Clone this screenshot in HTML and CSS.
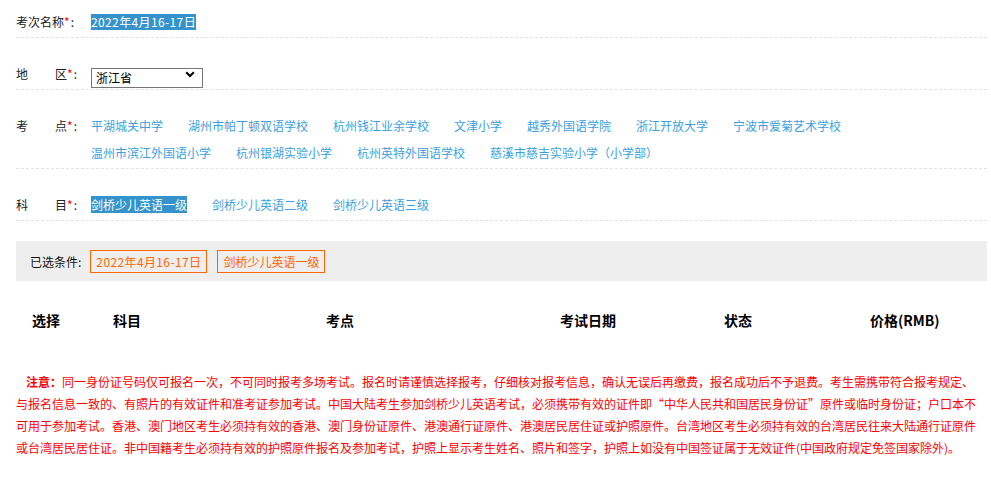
FILE: index.html
```html
<!DOCTYPE html>
<html lang="zh-CN">
<head>
<meta charset="utf-8">
<title>考试报名</title>
<link rel="stylesheet" href="styles.css">
</head>
<body>
<div class="page">
  <div class="row">
    <div class="label">考次名称<i>*</i>:</div>
    <div class="value"><span class="picked picked-date date">2022年4月16-17日</span></div>
  </div>
  <div class="row">
    <div class="label"><span class="spread">地</span>区<i>*</i>:</div>
    <div class="value">
      <div class="select-wrap">
        <select class="select"><option>浙江省</option></select>
        <svg class="chev" width="10" height="7" viewBox="0 0 10 7"><path d="M1.2 1.2L5 5L8.8 1.2" fill="none" stroke="#000" stroke-width="2"/></svg>
      </div>
    </div>
  </div>
  <div class="row">
    <div class="label"><span class="spread">考</span>点<i>*</i>:</div>
    <div class="value links">
      <a class="link">平湖城关中学</a>
      <a class="link">湖州市帕丁顿双语学校</a>
      <a class="link">杭州钱江业余学校</a>
      <a class="link">文津小学</a>
      <a class="link">越秀外国语学院</a>
      <a class="link">浙江开放大学</a>
      <a class="link">宁波市爱菊艺术学校</a>
      <a class="link">温州市滨江外国语小学</a>
      <a class="link">杭州银湖实验小学</a>
      <a class="link">杭州英特外国语学校</a>
      <a class="link">慈溪市慈吉实验小学（小学部）</a>
    </div>
  </div>
  <div class="row">
    <div class="label"><span class="spread">科</span>目<i>*</i>:</div>
    <div class="value links">
      <a class="link"><span class="picked">剑桥少儿英语一级</span></a>
      <a class="link">剑桥少儿英语二级</a>
      <a class="link">剑桥少儿英语三级</a>
    </div>
  </div>

  <div class="chosen">
    <span class="chosen-label">已选条件:</span>
    <span class="tag"><span class="date">2022年4月16-17日</span></span>
    <span class="tag">剑桥少儿英语一级</span>
  </div>

  <div class="thead">
    <div>选择</div>
    <div>科目</div>
    <div>考点</div>
    <div>考试日期</div>
    <div>状态</div>
    <div>价格(RMB)</div>
  </div>

  <p class="notice"><b>注意：</b>同一身份证号码仅可报名一次，不可同时报考多场考试。报名时请谨慎选择报考，仔细核对报考信息，确认无误后再缴费，报名成功后不予退费。考生需携带符合报考规定、与报名信息一致的、有照片的有效证件和准考证参加考试。中国大陆考生参加剑桥少儿英语考试，必须携带有效的证件即“中华人民共和国居民身份证”原件或临时身份证；户口本不可用于参加考试。香港、澳门地区考生必须持有效的香港、澳门身份证原件、港澳通行证原件、港澳居民居住证或护照原件。台湾地区考生必须持有效的台湾居民往来大陆通行证原件或台湾居民居住证。非中国籍考生必须持有效的护照原件报名及参加考试，护照上显示考生姓名、照片和签字，护照上如没有中国签证属于无效证件(中国政府规定免签国家除外)。</p>
</div>
</body>
</html>
```

FILE: styles.css
```css
html, body {
  margin: 0;
  padding: 0;
  background: #fff;
}

body {
  font-family: "Noto Sans CJK SC", sans-serif;
  font-size: 12px;
  color: #333;
}

.page {
  width: 971px;
  padding-left: 16px;
}

.row {
  display: flex;
  margin-top: 22px;
  padding-bottom: 2px;
  border-bottom: 1px dashed #e2e2e2;
  line-height: 27px;
}

.row:first-child {
  margin-top: 8px;
}

.label {
  flex: none;
  width: 75px;
  color: #222;
  white-space: nowrap;
}

.label i {
  font-style: normal;
  color: #f00;
  margin-right: 1px;
}

.spread {
  margin-right: 27px;
}

.value {
  flex: 1;
  display: flex;
  flex-wrap: wrap;
  align-items: center;
  min-height: 27px;
}

.picked {
  background: #3593cc;
  color: #fff;
}

.picked-date {
  line-height: 16px;
}

.date {
  letter-spacing: 0.38px;
}

.links .link {
  margin-right: 25px;
  color: #3a9fdd;
  text-decoration: none;
  white-space: nowrap;
  cursor: pointer;
}

.select-wrap {
  position: relative;
  width: 112px;
  height: 20px;
}

.select {
  appearance: none;
  -webkit-appearance: none;
  box-sizing: border-box;
  width: 112px;
  height: 20px;
  margin: 0;
  padding: 0 0 0 4px;
  border: 1px solid #767676;
  border-radius: 0;
  background: #fff;
  color: #000;
  font-family: "Noto Sans CJK SC", sans-serif;
  font-size: 12px;
  line-height: 18px;
}

.chev {
  position: absolute;
  right: 8px;
  top: 7px;
  pointer-events: none;
}

.chosen {
  margin-top: 20px;
  height: 40px;
  background: #eee;
  display: flex;
  align-items: center;
  padding-left: 14px;
}

.chosen-label {
  color: #111;
  margin-right: 9px;
}

.tag {
  border: 1px solid #f60;
  color: #f60;
  padding: 0 5px;
  line-height: 21px;
  margin-right: 10px;
}

.thead {
  margin-top: 20px;
  height: 38px;
  display: grid;
  grid-template-columns: 81px 213px 234px 164px 146px 1fr;
  align-items: center;
  padding-left: 16px;
  font-size: 14px;
  font-weight: bold;
  color: #000;
}

.notice {
  margin: 32px 0 0;
  width: 964px;
  font-size: 12px;
  line-height: 22px;
  color: #f00;
  text-indent: 10px;
}

.notice b {
  font-weight: bold;
}
```
